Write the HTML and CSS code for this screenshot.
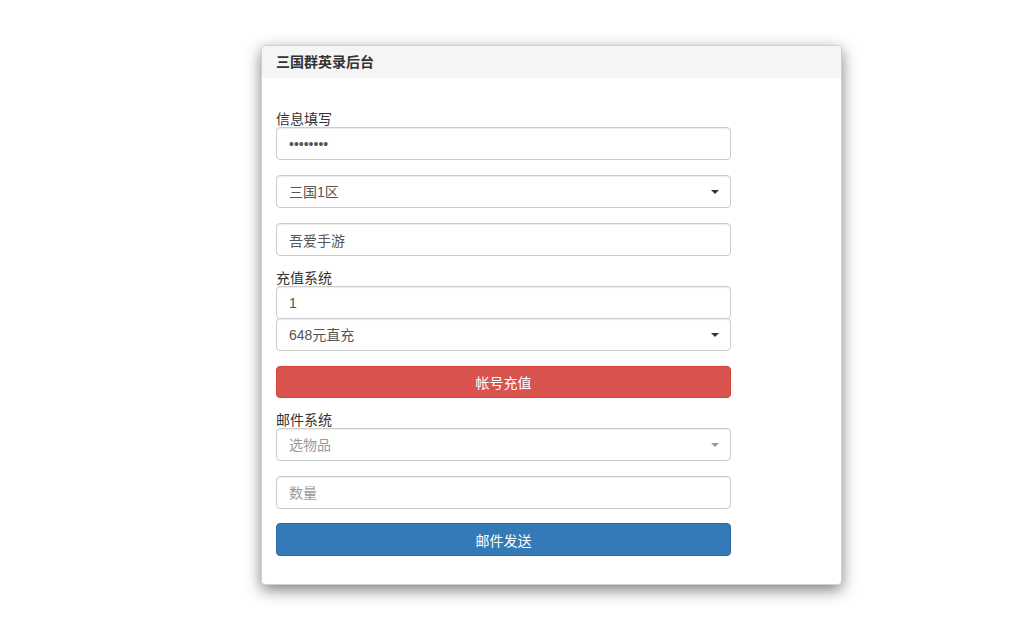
FILE: index.html
```html
<!DOCTYPE html>
<html lang="zh-CN">
<head>
<meta charset="utf-8">
<title>三国群英录后台</title>
<link rel="stylesheet" href="styles.css">
</head>
<body>
<div class="panel">
  <div class="panel-heading">三国群英录后台</div>
  <div class="panel-body">
    <form class="form">
      <label class="label">信息填写</label>
      <input class="control" type="password" value="12345678">
      <div class="select-wrap gap">
        <select class="control"><option>三国1区</option></select>
      </div>
      <input class="control gap" type="text" value="吾爱手游">

      <label class="label gap-label">充值系统</label>
      <input class="control" type="text" value="1">
      <div class="select-wrap join">
        <select class="control"><option>648元直充</option></select>
      </div>
      <button type="button" class="btn btn-danger gap">帐号充值</button>

      <label class="label gap-label">邮件系统</label>
      <div class="select-wrap muted">
        <select class="control placeholder"><option>选物品</option></select>
      </div>
      <input class="control gap" type="text" placeholder="数量">
      <button type="button" class="btn btn-primary">邮件发送</button>
    </form>
  </div>
</div>
</body>
</html>
```

FILE: styles.css
```css
* { box-sizing: border-box; }
html, body {
  margin: 0;
  padding: 0;
  background: #fff;
}
body {
  font-family: "Liberation Sans", "Noto Sans CJK SC", sans-serif;
  font-size: 14px;
  color: #333;
  padding-top: 45px;
  padding-bottom: 40px;
}
.panel {
  width: 581px;
  margin-left: 261px;
  background: #fff;
  border: 1px solid #d0d0d0;
  border-radius: 4px;
  box-shadow: 0 5px 15px rgba(0, 0, 0, 0.5);
}
.panel-heading {
  height: 32px;
  line-height: 32px;
  padding: 0 14px;
  background: #f5f5f5;
  border-top-left-radius: 3px;
  border-top-right-radius: 3px;
  font-weight: bold;
  font-size: 14px;
  color: #333;
}
.panel-body {
  padding: 33px 14px 28px;
}
.form {
  width: 455px;
  display: flex;
  flex-direction: column;
}
.label {
  display: block;
  height: 16px;
  line-height: 16px;
  font-size: 14px;
  color: #333;
}
.control {
  display: block;
  width: 100%;
  height: 33px;
  padding: 0 12px;
  font-family: "Liberation Sans", "Noto Sans CJK SC", sans-serif;
  font-size: 14px;
  color: #555;
  background: #fff;
  border: 1px solid #ccc;
  border-radius: 4px;
  box-shadow: inset 0 1px 1px rgba(0, 0, 0, 0.075);
  outline: none;
}
.control::placeholder { color: #999; }
select.control {
  -webkit-appearance: none;
  appearance: none;
  margin: 0;
}
.control.placeholder { color: #999; }
.select-wrap {
  position: relative;
}
.select-wrap::after {
  content: "";
  position: absolute;
  right: 12px;
  top: 15px;
  width: 0;
  height: 0;
  border-left: 4px solid transparent;
  border-right: 4px solid transparent;
  border-top: 4px solid #333;
  pointer-events: none;
}
.select-wrap.muted::after { border-top-color: #999; }
.btn {
  display: block;
  width: 100%;
  height: 33px;
  border: 1px solid transparent;
  border-radius: 4px;
  font-family: "Liberation Sans", "Noto Sans CJK SC", sans-serif;
  font-size: 14px;
  color: #fff;
  padding: 0;
  cursor: pointer;
}
.btn-danger {
  background: #d9534f;
  border-color: #d43f3a;
  height: 32px;
}
.btn-primary {
  background: #337ab7;
  border-color: #2e6da4;
}
.form .gap { margin-top: 15px; }
.form .gap-label { margin-top: 14px; }
.form .join { margin-top: -1px; }
.form .btn-primary { margin-top: 14px; }
.form input.control { margin-left: 0; margin-right: 0; margin-bottom: 0; }
```
